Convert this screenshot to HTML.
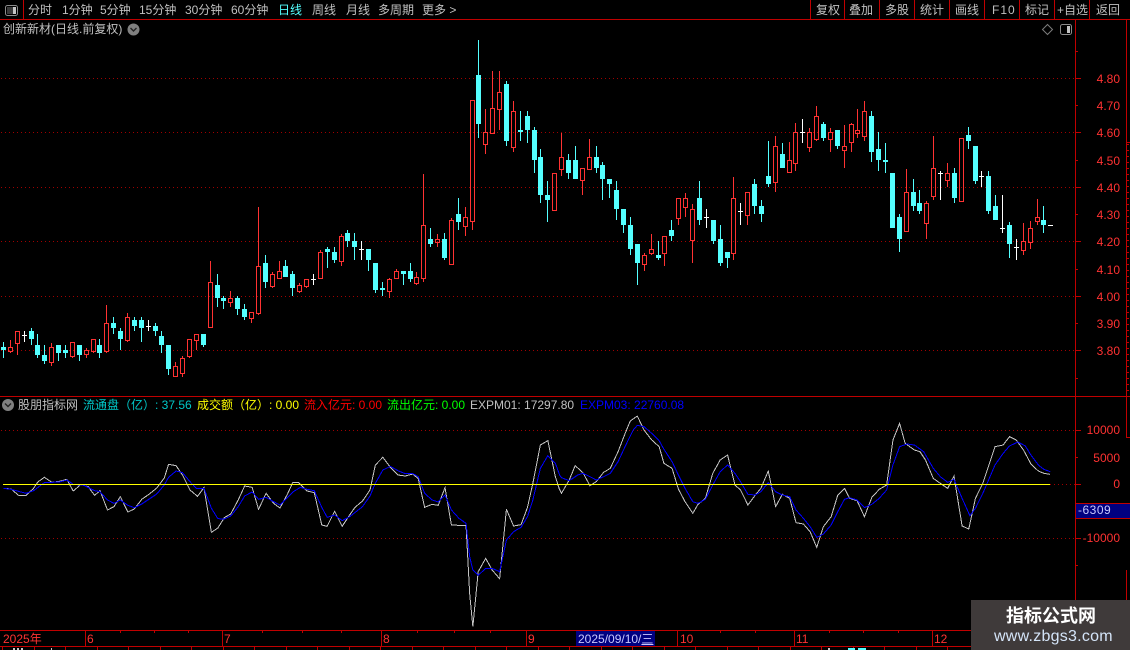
<!DOCTYPE html>
<html>
<head>
<meta charset="utf-8">
<style>
html,body{margin:0;padding:0;background:#000;}
body{width:1130px;height:650px;overflow:hidden;position:relative;font-family:"Liberation Sans","WenQuanYi Zen Hei","Noto Sans CJK SC",sans-serif;font-size:12px;color:#c0c0c0;}
.t{position:absolute;white-space:nowrap;line-height:14px;height:14px;}
.r{color:#ff3232;}
.ax{position:absolute;white-space:nowrap;line-height:14px;color:#ff3232;right:10px;text-align:right;}
svg{position:absolute;left:0;top:0;}
</style>
</head>
<body>
<svg id="s" width="1130" height="650" viewBox="0 0 1130 650" shape-rendering="crispEdges">
<g fill="#c00000" id="frame">
<rect x="0" y="19" width="1130" height="1"/>
<rect x="23" y="0" width="1" height="19"/>
<rect x="810" y="0" width="1" height="19"/>
<rect x="844" y="0" width="1" height="19"/>
<rect x="879" y="0" width="1" height="19"/>
<rect x="914" y="0" width="1" height="19"/>
<rect x="949" y="0" width="1" height="19"/>
<rect x="984" y="0" width="1" height="19"/>
<rect x="1019" y="0" width="1" height="19"/>
<rect x="1054" y="0" width="1" height="19"/>
<rect x="1089" y="0" width="1" height="19"/>
<rect x="1075" y="19" width="1" height="627"/>
<rect x="1126" y="19" width="1" height="418"/>
<rect x="1126" y="570" width="1" height="30"/>
<rect x="0" y="396" width="1130" height="1"/>
<rect x="0" y="630" width="971" height="1"/>
<rect x="0" y="646" width="971" height="1"/>
<rect x="85" y="630" width="1" height="16"/>
<rect x="222" y="630" width="1" height="16"/>
<rect x="381" y="630" width="1" height="16"/>
<rect x="526" y="630" width="1" height="16"/>
<rect x="677" y="630" width="1" height="16"/>
<rect x="794" y="630" width="1" height="16"/>
<rect x="932" y="630" width="1" height="16"/>
<rect x="1076" y="503" width="54" height="1"/>
<rect x="1076" y="518" width="54" height="1"/>
<rect x="1126" y="437" width="4" height="1"/>
<rect x="1126" y="142" width="4" height="1"/>
</g>
<g stroke="#a00000" stroke-width="1" stroke-dasharray="1 3" fill="none">
<path d="M1 78.5H1075M1 132.5H1075M1 187.5H1075M1 241.5H1075M1 296.5H1075M1 350.5H1075M1 430.5H1075M1 538.5H1075M1050 484.5H1075"/>
</g>
<g id="candles"></g>
<g fill="none" stroke="#c4c4c4" stroke-width="1">
<polyline vector-effect="non-scaling-stroke" transform="translate(0,420) scale(.35714,.33333)" points="10,205 31,207 52,226 73,226 94,205 106,186 124,172 145,187 166,184 187,178 205,213 226,194 247,200 265,226 280,212 301,270 319,260 337,230 358,276 376,267 397,238 418,222 439,204 460,174 472,133 493,137 511,165 532,210 553,229 571,203 592,337 610,324 628,293 646,282 667,240 685,198 706,202 724,268 745,220 766,250 784,264 805,222 820,187 835,187 860,213 880,218 901,315 916,319 937,274 958,319 979,285 994,262 1015,243 1036,210 1051,135 1072,112 1093,142 1114,165 1135,168 1156,162 1171,176 1189,262 1210,253 1227,256 1246,203 1264,315 1285,316 1305,317 1315,520 1324,620 1339,455 1360,415 1378,450 1399,476 1418,268 1438,318 1459,314 1477,262 1492,190 1513,75 1534,62 1555,170 1567,210"/>
<polyline vector-effect="non-scaling-stroke" transform="translate(550,410) scale(.36994,.33333)" points="26,238 31,250 52,210 68,167 89,188 108,227 125,215 145,187 163,175 184,125 205,65 217,33 236,18 254,60 275,90 295,110 308,160 330,175 347,237 365,275 386,310 400,283 420,265 440,190 460,150 480,135 500,225 515,240 535,285 555,255 570,235 590,183 610,290 628,253 648,265 665,338 685,342 703,365 721,412 739,350 760,320 778,255 796,235 810,265 830,272 850,320 870,262 890,238 910,225 927,90 945,40 960,100 985,120 1000,125 1015,150 1036,205 1055,220 1075,235 1092,198 1114,348 1132,357 1150,265 1170,220 1203,110 1225,105 1242,80 1260,90 1280,120 1300,162 1320,183 1335,190 1352,193"/>
</g>
<g fill="none" stroke="#0000ff" stroke-width="1">
<polyline vector-effect="non-scaling-stroke" transform="translate(0,420) scale(.35714,.33333)" points="10,205 31,208 73,220 94,212 124,188 166,186 187,180 205,193 235,196 265,212 280,215 301,240 319,250 337,240 358,256 376,263 397,252 439,222 460,195 472,172 493,153 511,158 532,185 550,205 571,205 592,265 610,296 628,297 646,288 667,260 685,228 706,216 724,238 745,232 766,245 784,255 820,216 841,202 860,208 880,212 901,262 916,292 937,285 958,302 979,290 1015,260 1036,228 1051,190 1072,150 1093,139 1114,152 1135,161 1156,161 1171,170 1189,220 1210,240 1227,246 1246,225 1264,270 1285,295 1305,310 1315,410 1324,450 1339,466 1360,445 1378,445 1399,455 1418,360 1438,335 1459,322 1477,290 1492,240 1513,145 1534,107 1555,130 1567,165"/>
<polyline vector-effect="non-scaling-stroke" transform="translate(550,410) scale(.36994,.33333)" points="26,195 31,203 52,212 75,195 89,190 108,200 125,210 145,200 163,190 184,155 205,105 225,60 236,46 254,50 275,70 295,92 308,118 330,155 347,195 365,235 386,275 400,280 420,268 440,225 460,185 480,165 500,190 515,215 535,253 555,255 570,245 590,218 610,245 628,255 648,260 665,300 685,325 703,350 721,382 739,372 760,345 778,305 796,268 810,263 830,270 850,293 870,283 890,265 910,240 927,165 945,110 965,102 985,105 1010,125 1036,175 1055,200 1075,217 1092,208 1114,265 1135,317 1150,295 1170,250 1203,165 1225,130 1242,108 1265,96 1285,108 1300,135 1320,165 1335,178 1352,185"/>
</g>
<rect x="3" y="484" width="1047" height="1" fill="#ffff00"/>
<g id="ticks" fill="#c00000"></g>
<rect x="576" y="631" width="79" height="15" fill="#000080"/>
<rect x="1076" y="504" width="54" height="14" fill="#000080"/>
<rect x="13" y="648" width="2" height="2" fill="#c8c8c8"/>
<rect x="17" y="648" width="2" height="2" fill="#c8c8c8"/>
<rect x="21" y="648" width="2" height="2" fill="#c8c8c8"/>
<rect x="51" y="648" width="1" height="2" fill="#c8c8c8"/>
<rect x="828" y="648" width="2" height="2" fill="#c8c8c8"/>
<rect x="848" y="648" width="7" height="2" fill="#54ffff"/>
<rect x="858" y="648" width="8" height="2" fill="#54ffff"/>
<g shape-rendering="auto">
<rect x="5.5" y="5.5" width="12" height="10" rx="2" fill="none" stroke="#8c8c8c"/>
<rect x="7" y="7" width="6" height="7" fill="#3a3a3a"/>
<rect x="13" y="7" width="3" height="7" fill="#c4c4c4"/>
<rect x="1060.5" y="24.5" width="11" height="10" rx="2" fill="none" stroke="#8c8c8c"/>
<rect x="1067" y="26" width="3" height="7" fill="#c4c4c4"/>
<path d="M1047.5 24.5L1052.5 29.5L1047.5 34.5L1042.5 29.5Z" fill="none" stroke="#7c7c7c"/>
<circle cx="133.5" cy="29.5" r="6" fill="#808080"/>
<path d="M130.5 28L133.5 31L136.5 28" fill="none" stroke="#222" stroke-width="1.4"/>
<circle cx="8" cy="405" r="6" fill="#808080"/>
<path d="M5 403.5L8 406.5L11 403.5" fill="none" stroke="#222" stroke-width="1.4"/>
</g>
</svg>

<div class="t" style="left:28px;top:3px">分时</div>
<div class="t" style="left:62px;top:3px">1分钟</div>
<div class="t" style="left:100px;top:3px">5分钟</div>
<div class="t" style="left:139px;top:3px">15分钟</div>
<div class="t" style="left:185px;top:3px">30分钟</div>
<div class="t" style="left:231px;top:3px">60分钟</div>
<div class="t" style="left:278px;top:3px;color:#54ffff">日线</div>
<div class="t" style="left:312px;top:3px">周线</div>
<div class="t" style="left:346px;top:3px">月线</div>
<div class="t" style="left:378px;top:3px">多周期</div>
<div class="t" style="left:422px;top:3px">更多 &gt;</div>
<div class="t" style="left:816px;top:3px">复权</div>
<div class="t" style="left:849px;top:3px">叠加</div>
<div class="t" style="left:885px;top:3px">多股</div>
<div class="t" style="left:920px;top:3px">统计</div>
<div class="t" style="left:955px;top:3px">画线</div>
<div class="t" style="left:992px;top:3px;letter-spacing:1px">F10</div>
<div class="t" style="left:1025px;top:3px">标记</div>
<div class="t" style="left:1057px;top:3px">+自选</div>
<div class="t" style="left:1096px;top:3px">返回</div>
<div class="t" style="left:3px;top:22px">创新新材(日线.前复权)</div>

<div class="ax" style="top:72px">4.80</div>
<div class="ax" style="top:99px">4.70</div>
<div class="ax" style="top:126px">4.60</div>
<div class="ax" style="top:154px">4.50</div>
<div class="ax" style="top:181px">4.40</div>
<div class="ax" style="top:208px">4.30</div>
<div class="ax" style="top:235px">4.20</div>
<div class="ax" style="top:263px">4.10</div>
<div class="ax" style="top:290px">4.00</div>
<div class="ax" style="top:317px">3.90</div>
<div class="ax" style="top:344px">3.80</div>

<div class="t" style="left:18px;top:398px">股朋指标网</div>
<div class="t" style="left:83px;top:398px;color:#00c8c8">流通盘（亿）: 37.56</div>
<div class="t" style="left:197px;top:398px;color:#ffff00">成交额（亿）: 0.00</div>
<div class="t" style="left:304px;top:398px;color:#ff0000">流入亿元: 0.00</div>
<div class="t" style="left:387px;top:398px;color:#00ff00">流出亿元: 0.00</div>
<div class="t" style="left:470px;top:398px">EXPM01: 17297.80</div>
<div class="t" style="left:580px;top:398px;color:#0000ff">EXPM03: 22760.08</div>

<div class="ax" style="top:423px">10000</div>
<div class="ax" style="top:451px">5000</div>
<div class="ax" style="top:477px">0</div>
<div class="t" style="left:1078px;top:503px;color:#c8c8ff;letter-spacing:.5px">-6309</div>
<div class="ax" style="top:531px">-10000</div>

<div class="t r" style="left:3px;top:632px">2025年</div>
<div class="t r" style="left:87px;top:632px">6</div>
<div class="t r" style="left:224px;top:632px">7</div>
<div class="t r" style="left:383px;top:632px">8</div>
<div class="t r" style="left:528px;top:632px">9</div>
<div class="t" style="left:578px;top:632px;color:#c8c8ff">2025/09/10/<span style="text-decoration:underline">三</span></div>
<div class="t r" style="left:680px;top:632px">10</div>
<div class="t r" style="left:796px;top:632px">11</div>
<div class="t r" style="left:934px;top:632px">12</div>

<div style="position:absolute;left:971px;top:600px;width:159px;height:50px;background:#3f3a3a"></div>
<div class="t" style="left:1006px;top:605px;height:20px;line-height:20px;font-size:18px;font-weight:bold;color:#fff;font-family:'Noto Sans CJK SC',sans-serif">指标公式网</div>
<div class="t" style="left:994px;top:628px;height:18px;line-height:18px;font-size:16px;color:#d4e4f8;letter-spacing:.25px">www.zbgs3.com</div>

<script>
var G=[
[240,"c306,321,330,354 r300,321,332,339 r274,274,308,345 w273,285,306 c264,273,297,315 c282,315,345,354 c315,345,363,372 r309,321,366,378 c315,315,339,363 c315,330,339,354 r306,306,348,354 c315,315,345,363 r324,330,342,354 r297,297,333,339 c297,315,339,354 r195,249,333,339 c231,249,264,282 c264,273,297,330 r219,231,300,306 c231,240,258,273 c231,240,264,306 w240,258,273 c249,258,273,288 c273,288,315,339 c315,315,387,405 r366,378,408,408 r348,354,399,411 r297,297,348,354 r282,282,300,330 c282,282,315,321 r63,126,261,261 c102,135,174,201 c168,174,183,207 r153,174,186,201 c168,174,207,225 c192,207,231,240 r216,216,234,249"],
[170,"r111,288,429,435 c255,279,336,354 r306,312,348,354 r273,303,324,327 c270,288,321,321 c303,312,354,378 r339,345,363,369 r327,327,348,354 w312,328,345 r240,246,324,324 c231,237,246,294 c231,246,270,279 r192,198,273,288 c180,189,213,231 c189,213,231,270 w213,237,270 c237,237,270,303 c279,279,360,369 c336,354,360,378 r324,327,363,384 r297,303,324,327 c303,303,312,345 c279,303,327,336 r306,321,339,345 r12,165,324,336 c174,207,222,231 r192,207,216,231 c189,207,264,270 r144,150,282,282 c84,132,156,180 r111,141,168,198"],
[30,"r210,210,573,600 c30,135,282,324 r237,306,342,372 r123,234,309,309 r123,186,237,300 c153,162,333,348 r213,243,351,366 c243,300,306,333 c243,258,300,339 c291,300,390,429 c357,381,495,519 c453,495,510,576 r429,429,540,540 r309,381,417,438 c372,390,429,447 c348,390,447,447 r414,414,450,495 r327,381,417,417 c348,381,414,429 c396,405,447,510 c447,447,462,504 c453,480,537,570 c537,537,585,609 c561,585,657,675 c642,642,699,765 r669,675,702,723 r612,657,669,675 c633,675,684,690 r618,618,669,708 c570,600,618,633 r504,504,564,585 r489,504,531,561 r522,537,630,699 c453,504,570,585 w537,561,594 c570,570,633,642"],
[90,"c405,447,519,528 c486,486,504,534 r261,324,489,510 w339,364,405 r306,306,375,405 c267,282,348,372 c330,348,372,396 c153,258,282,291 r138,168,276,306 c159,192,234,234 r156,210,246,246 r99,126,219,243 w87,127,159 r114,126,171,186 r48,78,147,153 c96,102,144,153 r114,126,147,186 c120,120,168,177 r105,168,179,234 r99,102,156,186 r57,120,129,144 r33,63,138,153 c63,78,186,216 c126,177,210,243 c159,210,216,249"],
[110,"c189,189,354,354 c312,321,387,426 r177,246,363,363 c207,246,288,303 c240,279,303,312 r273,279,339,387 r78,174,258,270 w183,189,270 r159,189,210,231 c174,189,264,279 r84,84,273,273 c51,75,93,117 c108,108,213,222 w183,199,231 c183,198,303,312 c255,288,330,330 w255,355,369 c336,345,402,444 w387,411,450 r339,393,420,435 r333,354,396,417 r267,321,333,345 c288,330,345,369"]
];
var six={5:1,14:1,23:1,32:1,41:1,50:1,60:1,69:1,78:1,87:1,96:1,106:1,115:1,124:1,133:1,142:1,151:1};
var x=3,i=0,h='';
function R(a,b,w,hh,c){if(hh>0)h+='<rect x="'+a+'" y="'+b+'" width="'+w+'" height="'+hh+'" fill="'+c+'"/>';}
G.forEach(function(g){
 var off=g[0];
 g[1].split(' ').forEach(function(s){
  var t=s[0],v=s.slice(1).split(',').map(function(n){return Math.round(off+(+n)/3);});
  if(t=='w'){R(x,v[0],1,v[2]-v[0],'#fff');R(x-2,v[1],5,1,'#fff');}
  else{
   var c=t=='c'?'#54ffff':'#ff3232',hi=v[0],tp=v[1],bt=v[2],lo=v[3];
   R(x,hi,1,tp-hi,c);R(x,bt,1,lo-bt,c);
   if(t=='c'){R(x-2,tp,5,bt-tp,c);}
   else{R(x-2,tp,5,1,c);R(x-2,bt,5,1,c);R(x-2,tp,1,bt-tp,c);R(x+2,tp,1,bt-tp+1,c);}
  }
  i++;
  x+=six[i]?6:7;
 });
});
R(1048,225,5,1,'#fff');
document.getElementById('candles').innerHTML=h;
var k='';
function T(a,b,w,hh){k+='<rect x="'+a+'" y="'+b+'" width="'+w+'" height="'+hh+'"/>';}
[78,132,187,241,296,350].forEach(function(y){T(1076,y,5,1);});
[51,105,160,214,269,323,378].forEach(function(y){T(1076,y,2,1);});
[430,484,538].forEach(function(y){T(1076,y,5,1);});
[457,511,565].forEach(function(y){T(1076,y,2,1);});
[120,154,188,262,302,341,417,454,490,720,755,829,863,898].forEach(function(a){T(a,631,1,2);});
for(var a=2;a<971;a+=31.5){T(Math.round(a),647,1,3);}
for(var y=30;y<396;y+=6){if(y>142)T(1127,y,2,1);}
document.getElementById('ticks').innerHTML=k;
</script>
</body>
</html>
